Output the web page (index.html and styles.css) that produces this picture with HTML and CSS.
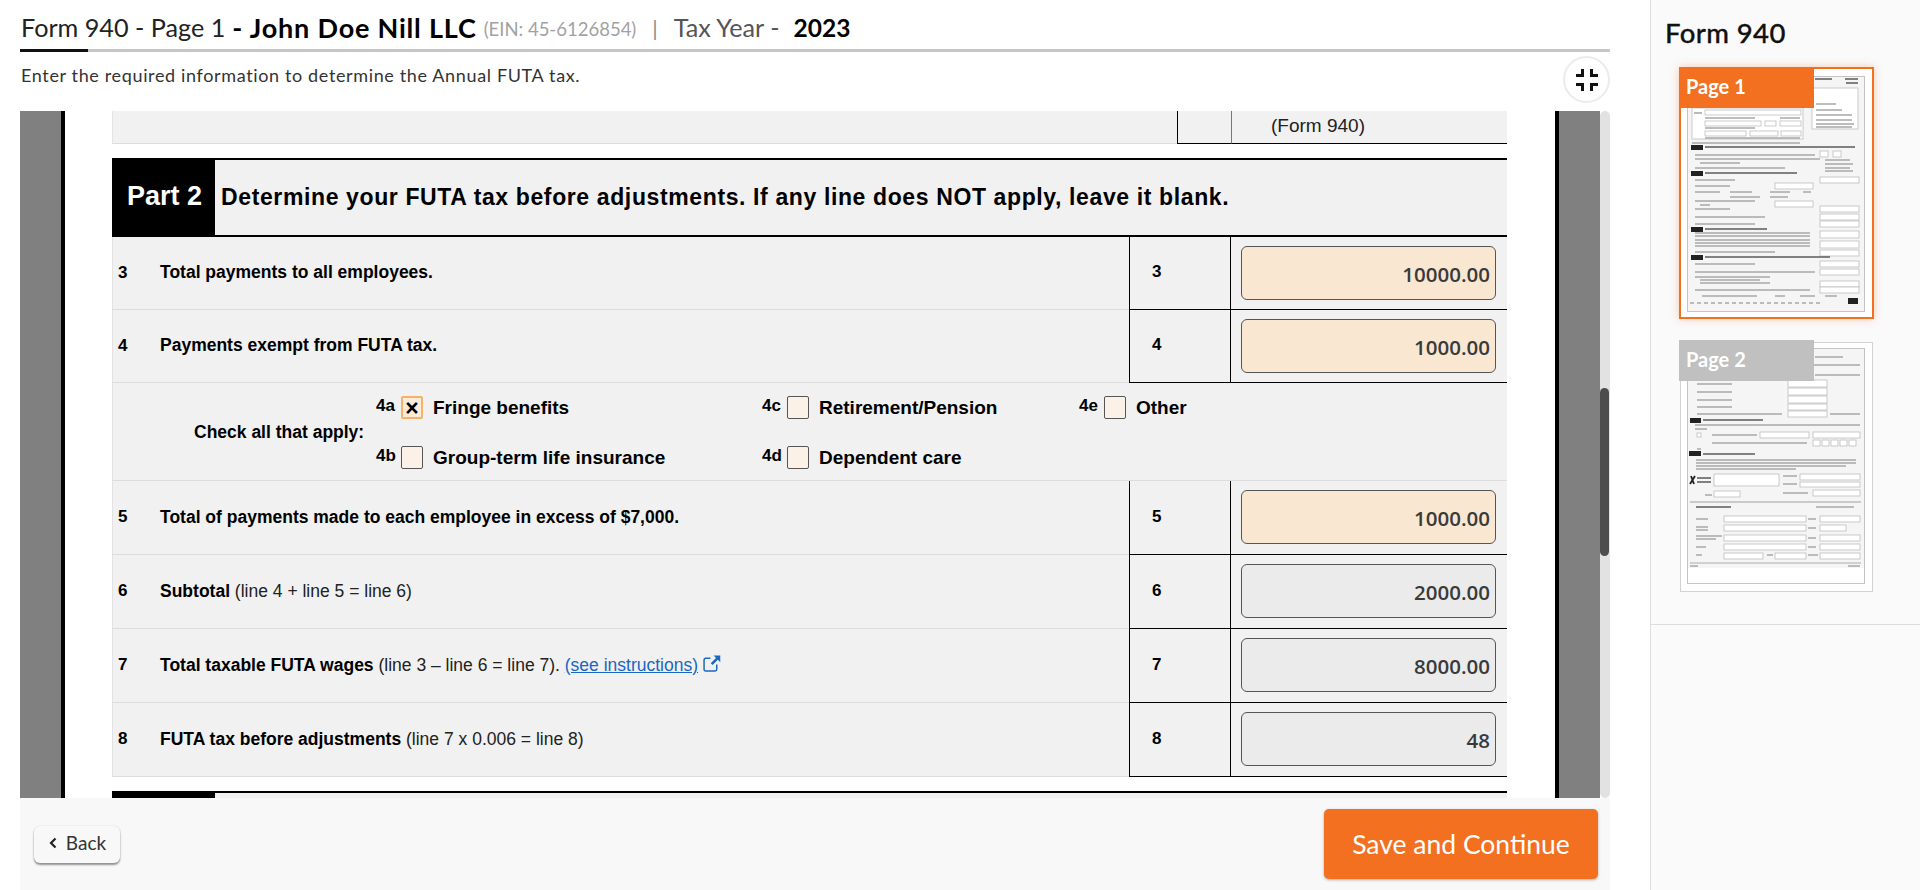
FILE: index.html
```html
<!DOCTYPE html>
<html lang="en">
<head>
  <meta charset="UTF-8" />
  <title>Form 940 - Page 1</title>
  <link rel="stylesheet" href="styles.css">
</head>
<body>
  <div class="main">
    <div class="page-title">
      <span>Form 940 - Page 1</span>
      <b class="company">- John Doe Nill LLC</b>
      <small class="ein">(EIN: 45-6126854)</small>
      <span class="sep">|</span>
      <span class="year-label">Tax Year -</span>
      <b class="year">2023</b>
    </div>
    <div class="tab-line"><div class="tab-line-active"></div></div>
    <div class="sub-row">
      <p class="sub-text">Enter the required information to determine the Annual FUTA tax.</p>
      <button class="collapse-btn" aria-label="Collapse">
        <svg width="22" height="22" viewBox="0 0 22 22">
          <path d="M5 0h3v8H0V5h5zM14 0h3v5h5v3h-8zM0 14h8v8H5v-5H0zM14 14h8v3h-5v5h-3z" fill="#111"/>
        </svg>
      </button>
    </div>

    <div class="viewer">
      <div class="viewer-bg">
        <div class="sheet">
          <div class="stub-row">
            <div class="stub-left"></div>
            <div class="stub-num"></div>
            <div class="stub-val">(Form 940)</div>
          </div>

          <div class="part-head">
            <div class="part-tag">Part 2</div>
            <div class="part-title">Determine your FUTA tax before adjustments. If any line does NOT apply, leave it blank.</div>
          </div>

          <div class="line-row short">
            <div class="line-left"><span class="line-no">3</span><span class="line-text"><b>Total payments to all employees.</b></span></div>
            <div class="line-num">3</div>
            <div class="line-val"><div class="amount">10000.00</div></div>
          </div>
          <div class="line-row short">
            <div class="line-left"><span class="line-no">4</span><span class="line-text"><b>Payments exempt from FUTA tax.</b></span></div>
            <div class="line-num">4</div>
            <div class="line-val"><div class="amount">1000.00</div></div>
          </div>

          <div class="check-row">
            <div class="check-title">Check all that apply:</div>
            <div class="check-grid">
              <div class="check-item"><span class="check-code">4a</span><span class="box checked">×</span><span>Fringe benefits</span></div>
              <div class="check-item"><span class="check-code">4c</span><span class="box"></span><span>Retirement/Pension</span></div>
              <div class="check-item"><span class="check-code">4e</span><span class="box"></span><span>Other</span></div>
              <div class="check-item"><span class="check-code">4b</span><span class="box"></span><span>Group-term life insurance</span></div>
              <div class="check-item"><span class="check-code">4d</span><span class="box"></span><span>Dependent care</span></div>
            </div>
          </div>

          <div class="line-row">
            <div class="line-left"><span class="line-no">5</span><span class="line-text"><b>Total of payments made to each employee in excess of $7,000.</b></span></div>
            <div class="line-num">5</div>
            <div class="line-val"><div class="amount">1000.00</div></div>
          </div>
          <div class="line-row">
            <div class="line-left"><span class="line-no">6</span><span class="line-text"><b>Subtotal</b> (line 4 + line 5 = line 6)</span></div>
            <div class="line-num">6</div>
            <div class="line-val"><div class="amount calc">2000.00</div></div>
          </div>
          <div class="line-row">
            <div class="line-left"><span class="line-no">7</span><span class="line-text"><b>Total taxable FUTA wages</b> (line 3 – line 6 = line 7). <a class="help-link" href="#">(see instructions)</a>
              <svg class="ext-icon" width="18" height="17" viewBox="0 0 17 16"><path d="M13 9v4.500a1.500 1.500 0 0 1-1.500 1.500h-9A1.500 1.500 0 0 1 1 13.500v-9A1.500 1.500 0 0 1 2.500 3H7" fill="none" stroke="#1a66c0" stroke-width="1.400"/><path d="M10 0.500h6.300v6.300l-2.300-2.300-5 5-1.700-1.700 5-5z" fill="#1a66c0"/></svg>
            </span></div>
            <div class="line-num">7</div>
            <div class="line-val"><div class="amount calc">8000.00</div></div>
          </div>
          <div class="line-row">
            <div class="line-left"><span class="line-no">8</span><span class="line-text"><b>FUTA tax before adjustments</b> (line 7 x 0.006 = line 8)</span></div>
            <div class="line-num">8</div>
            <div class="line-val"><div class="amount calc">48</div></div>
          </div>

          <div class="part-head next">
            <div class="part-tag"></div>
            <div class="part-title"></div>
          </div>
        </div>
      </div>
      <div class="scroll-track"><div class="scroll-thumb"></div></div>
    </div>

    <div class="footer">
      <button class="back-btn">
        <svg width="10" height="12" viewBox="0 0 10 12"><path d="M7.500 1.500 3 6l4.500 4.500" fill="none" stroke="#222" stroke-width="2.200"/></svg>
        Back
      </button>
      <button class="save-btn">Save and Continue</button>
    </div>
  </div>

  <aside class="sidebar">
    <div class="side-top">
      <h2 class="side-title">Form 940</h2>

      <div class="thumb active">
        <div class="thumb-tag">Page 1</div>
        <svg class="thumb-img" width="191" height="248" viewBox="1681 69 191 248">
          <rect class="pg" x="1687.500" y="76.500" width="177" height="235"/>
          <path class="tx dark" d="M1815 79h17M1845 79h13M1846 83h12"/>
          <rect x="1815" y="89" width="41" height="7" fill="#111"/>
          <rect class="bx" x="1812" y="88" width="46" height="41"/>
          <path class="tx" d="M1816 104h20M1816 110h26M1816 115h36M1816 120h36M1816 124h38M1816 127h36"/>
          <rect class="bx" x="1692" y="108" width="111" height="31"/>
          <path class="tx" d="M1694 113h8"/>
          <rect class="bx" x="1705" y="110" width="96" height="5"/>
          <rect class="bx" x="1705" y="121" width="56" height="5"/>
          <rect class="bx" x="1765" y="121" width="11" height="5"/>
          <rect class="bx" x="1780" y="121" width="21" height="5"/>
          <rect class="bx" x="1705" y="131" width="41" height="5"/>
          <rect class="bx" x="1750" y="131" width="28" height="5"/>
          <rect class="bx" x="1781" y="131" width="20" height="5"/>
          <path class="tx" d="M1705 118h50M1780 118h20M1705 128h50M1705 138h95M1692 143h108"/>

          <rect x="1691" y="145" width="12" height="5" fill="#222"/>
          <path class="tx dark" d="M1705 147h150"/>
          <path class="tx" d="M1695 155h120M1695 159h125M1700 163h40M1695 168h90M1825 160h25M1825 164h28M1825 168h25M1825 171h28"/>
          <rect class="bx" x="1820" y="151" width="8" height="6"/>
          <rect class="bx" x="1833" y="151" width="8" height="6"/>

          <rect x="1691" y="171" width="12" height="5" fill="#222"/>
          <path class="tx dark" d="M1705 173h92"/>
          <path class="tx" d="M1695 180h40M1695 186h35M1695 192h25M1730 192h22M1770 192h20M1803 192h8M1730 197h30M1770 197h18M1695 201h60M1700 205h10M1695 209h35M1695 217h70M1695 224h60"/>
          <rect class="bx" x="1820" y="177" width="39" height="6"/>
          <rect class="bx" x="1775" y="183" width="38" height="6"/>
          <rect class="bx" x="1775" y="201" width="38" height="6"/>
          <rect class="bx" x="1820" y="206" width="39" height="6"/>
          <rect class="bx" x="1820" y="214" width="39" height="6"/>
          <rect class="bx" x="1820" y="221" width="39" height="6"/>

          <rect x="1691" y="227" width="12" height="5" fill="#222"/>
          <path class="tx dark" d="M1705 229h62"/>
          <path class="tx" d="M1695 233h115M1695 236h115M1695 240h115M1695 243h115M1695 246h115M1695 252h80"/>
          <rect class="bx" x="1820" y="231" width="39" height="7"/>
          <rect class="bx" x="1820" y="241" width="39" height="7"/>
          <rect class="bx" x="1820" y="250" width="39" height="6"/>

          <rect x="1691" y="255" width="12" height="5" fill="#222"/>
          <path class="tx dark" d="M1705 257h125"/>
          <path class="tx" d="M1695 264h60M1695 272h120M1695 277h75M1700 280h60M1700 283h70M1695 290h115M1702 296h55M1775 296h10M1800 296h15M1825 296h12"/>
          <rect class="bx" x="1820" y="261" width="39" height="6"/>
          <rect class="bx" x="1820" y="269" width="39" height="6"/>
          <rect class="bx" x="1820" y="281" width="39" height="6"/>
          <rect class="bx" x="1820" y="287" width="39" height="6"/>
          <rect x="1848" y="298" width="10" height="6" fill="#222"/>
          <path class="tx" d="M1690 303h130" stroke-dasharray="4 3"/>
        </svg>
      </div>

      <div class="thumb">
        <div class="thumb-tag">Page 2</div>
        <svg class="thumb-img" width="191" height="248" viewBox="1681 343 191 248">
          <rect class="pg" x="1687.500" y="348.500" width="177" height="235"/>
          <path class="tx" d="M1815 357h28M1800 365h60M1815 375h45M1697 384h35M1697 392h35M1697 400h35M1697 407h35M1697 414h85M1830 414h30"/>
          <rect class="bx" x="1788" y="380" width="39" height="7"/>
          <rect class="bx" x="1788" y="388" width="39" height="7"/>
          <rect class="bx" x="1788" y="396" width="39" height="7"/>
          <rect class="bx" x="1788" y="404" width="39" height="6"/>
          <rect class="bx" x="1788" y="411" width="39" height="6"/>
          <rect x="1690" y="418" width="11" height="5" fill="#222"/>
          <path class="tx dark" d="M1703 420h60"/>
          <path class="tx" d="M1695 425h165M1695 429h12M1712 435h45M1712 443h95M1697 449h4"/>
          <rect class="bx" x="1697" y="433" width="4" height="4"/>
          <rect class="bx" x="1760" y="432" width="49" height="6"/>
          <rect class="bx" x="1813" y="432" width="47" height="6"/>
          <rect class="bx" x="1813" y="440" width="7" height="6"/>
          <rect class="bx" x="1822" y="440" width="7" height="6"/>
          <rect class="bx" x="1831" y="440" width="7" height="6"/>
          <rect class="bx" x="1840" y="440" width="7" height="6"/>
          <rect class="bx" x="1849" y="440" width="7" height="6"/>
          <rect x="1689" y="451" width="12" height="5" fill="#222"/>
          <path class="tx dark" d="M1703 454h52"/>
          <path class="tx" d="M1696 460h160M1696 463h160M1696 466h150M1696 469h100"/>
          <path d="M1690 484l5-8M1691 476l3 8" stroke="#222" stroke-width="1.800" fill="none"/>
          <path class="tx dark" d="M1697 478h14M1697 482h14"/>
          <rect class="bx" x="1714" y="474" width="65" height="12"/>
          <path class="tx" d="M1783 476h14M1783 484h14M1783 493h25M1705 495h7"/>
          <rect class="bx" x="1800" y="474" width="60" height="6"/>
          <rect class="bx" x="1800" y="482" width="60" height="5"/>
          <rect class="bx" x="1813" y="490" width="47" height="6"/>
          <rect class="bx" x="1714" y="491" width="26" height="6"/>
          <path d="M1690 502h171" stroke="#bbb" stroke-width="1.500"/>
          <path class="tx dark" d="M1696 507h35"/>
          <path class="tx" d="M1816 507h38M1696 519h12M1696 527h12M1696 530h12M1696 536h26M1696 539h20M1696 547h10M1696 555h6M1808 519h8M1808 528h8M1808 538h8M1808 547h8M1808 555h10M1767 555h6"/>
          <rect class="bx" x="1724" y="516" width="82" height="6"/>
          <rect class="bx" x="1820" y="516" width="40" height="6"/>
          <rect class="bx" x="1724" y="525" width="82" height="6"/>
          <rect class="bx" x="1820" y="525" width="26" height="6"/>
          <rect class="bx" x="1724" y="535" width="82" height="6"/>
          <rect class="bx" x="1820" y="535" width="40" height="6"/>
          <rect class="bx" x="1724" y="544" width="82" height="6"/>
          <rect class="bx" x="1820" y="544" width="40" height="6"/>
          <rect class="bx" x="1724" y="553" width="39" height="6"/>
          <rect class="bx" x="1775" y="553" width="31" height="6"/>
          <rect class="bx" x="1820" y="553" width="40" height="6"/>
          <path d="M1690 563h171" stroke="#aaa" stroke-width="1"/>
          <path class="tx" d="M1690 566h8M1848 566h12"/>
          <rect x="1688" y="568" width="176" height="15" fill="#fff"/>
        </svg>
      </div>
    </div>
  </aside>
</body>
</html>
```

FILE: styles.css
```css
html, body {
  margin: 0;
  padding: 0;
  height: 100%;
  overflow: hidden;
  background: #fff;
  color: #111;
  font-family: Lato, "Noto Sans", sans-serif;
}

body {
  display: flex;
}

button {
  font-family: inherit;
  cursor: pointer;
}

.main {
  width: 1650px;
  box-sizing: border-box;
  padding: 0 40px 0 20px;
  display: flex;
  flex-direction: column;
  height: 890px;
}

.page-title {
  height: 49px;
  display: flex;
  align-items: center;
  white-space: pre;
  font-size: 25.200px;
  padding: 5px 0 0 1px;
  box-sizing: border-box;
  color: #222;
}

.company {
  margin-left: 7px;
  font-weight: 700;
  color: #000;
  font-size: 27px;
  letter-spacing: 0.800px;
}

.ein {
  margin-left: 7px;
  font-size: 18.500px;
  color: #a2a2a2;
  padding-top: 3px;
}

.sep {
  margin-left: 16px;
  color: #8c8c8c;
  font-size: 22px;
}

.year-label {
  margin-left: 16px;
  color: #555;
}

.year {
  margin-left: 14px;
  color: #000;
  font-size: 24.500px;
}

.tab-line {
  height: 3px;
  background: #c6c6c6;
}

.tab-line-active {
  width: 68px;
  height: 3px;
  background: #111;
}

.sub-row {
  height: 59px;
  display: flex;
  justify-content: space-between;
  align-items: flex-start;
}

.sub-text {
  margin: 12px 0 0 1px;
  font-size: 18px;
  letter-spacing: 0.640px;
  line-height: 22px;
  color: #333;
}

.collapse-btn {
  width: 47px;
  height: 47px;
  margin-top: 4px;
  padding: 0;
  border: 2px solid #ececec;
  border-radius: 50%;
  background: #fff;
  display: flex;
  align-items: center;
  justify-content: center;
}

.viewer {
  height: 687px;
  display: flex;
  flex-shrink: 0;
}

.viewer-bg {
  flex: 1;
  background: #808080;
  padding: 0 41px;
  overflow: hidden;
}

.sheet {
  height: 100%;
  box-sizing: border-box;
  border-left: 4px solid #000;
  border-right: 4px solid #000;
  background: #fff;
  padding: 0 48px 0 47px;
  overflow: hidden;
  font-family: "Liberation Sans", Arial, sans-serif;
  color: #000;
}

.scroll-track {
  width: 10px;
  background: #e2e2e2;
  border-radius: 5px;
  padding-top: 277px;
  box-sizing: border-box;
}

.scroll-thumb {
  width: 9px;
  height: 168px;
  background: #4d4d4d;
  border-radius: 5px;
}

.stub-row {
  height: 33px;
  display: flex;
  background: #f1f1f1;
  box-sizing: border-box;
}

.stub-left {
  width: 1064px;
  border-bottom: 1px solid #ddd;
  border-left: 1px solid #e4e4e4;
}

.stub-num {
  width: 53px;
  border-left: 1px solid #000;
  border-right: 1px solid #777;
  border-bottom: 1px solid #000;
}

.stub-val {
  flex: 1;
  padding: 4px 0 0 39px;
  font-size: 19px;
  color: #222;
  border-bottom: 1px solid #000;
}

.part-head {
  height: 79px;
  margin-top: 14px;
  box-sizing: border-box;
  border-top: 2px solid #000;
  border-bottom: 2px solid #000;
  display: flex;
  background: #f1f1f1;
}

.part-tag {
  width: 103px;
  background: #000;
  color: #fff;
  font-size: 27px;
  font-weight: 700;
  display: flex;
  align-items: center;
  justify-content: center;
  padding: 0 0 2px 2px;
  box-sizing: border-box;
}

.part-title {
  flex: 1;
  padding-left: 6px;
  font-size: 23px;
  font-weight: 700;
  letter-spacing: 0.620px;
  display: flex;
  align-items: center;
  white-space: nowrap;
}

.part-head.next {
  height: 40px;
}

.line-row {
  height: 74px;
  display: flex;
  background: #f1f1f1;
}

.line-row.short {
  height: 73px;
}

.line-left {
  width: 1017px;
  box-sizing: border-box;
  border-left: 1px solid #e2e2e2;
  border-bottom: 1px solid #ddd;
  padding: 0 0 1px 5px;
  display: flex;
  align-items: center;
  font-size: 17.500px;
  color: #222;
}

.line-left b {
  color: #000;
}

.line-no {
  width: 42px;
  font-size: 17px;
  font-weight: 700;
  color: #000;
}

.help-link {
  color: #1a66c0;
}

.ext-icon {
  vertical-align: -1px;
}

.line-num {
  width: 101px;
  box-sizing: border-box;
  border-left: 1px solid #000;
  border-bottom: 1px solid #000;
  padding: 0 0 2px 22px;
  display: flex;
  align-items: center;
  font-size: 17px;
  font-weight: 700;
}

.line-val {
  flex: 1;
  box-sizing: border-box;
  border-left: 1px solid #000;
  border-bottom: 1px solid #000;
  padding: 9px 11px 0 10px;
}

.amount {
  height: 54px;
  box-sizing: border-box;
  border: 1px solid #555;
  border-radius: 6px;
  background: #f9e7d2;
  font-family: "Open Sans", "Noto Sans", sans-serif;
  font-size: 20.500px;
  font-weight: 600;
  color: #3a3a3a;
  text-align: right;
  line-height: 55px;
  padding-right: 5px;
}

.amount.calc {
  background: #ebebeb;
}

.check-row {
  height: 98px;
  box-sizing: border-box;
  background: #f1f1f1;
  border-left: 1px solid #e2e2e2;
  border-bottom: 1px solid #ddd;
  display: flex;
  align-items: center;
  font-weight: 700;
  padding-top: 2px;
}

.check-title {
  width: 263px;
  padding: 0 0 0 81px;
  box-sizing: border-box;
  font-size: 17.500px;
  white-space: nowrap;
}

.check-grid {
  display: grid;
  grid-template-columns: 386px 317px 200px;
  row-gap: 27px;
}

.check-item {
  display: flex;
  align-items: center;
  height: 23px;
  font-size: 19px;
}

.check-code {
  width: 25px;
  font-size: 17px;
  padding-bottom: 3px;
}

.box {
  width: 22px;
  height: 23px;
  box-sizing: border-box;
  border: 1px solid #555;
  border-radius: 2px;
  background: #fbf1e6;
  margin-right: 10px;
  text-align: center;
  font-size: 23px;
  line-height: 20px;
  font-weight: 700;
}

.box.checked {
  border: 2px solid #f6b26b;
  background: #fbecd9;
}

.footer {
  flex: 1;
  background: #f8f8f8;
  display: flex;
  justify-content: space-between;
  align-items: center;
  padding: 0 12px 0 14px;
}

.back-btn {
  width: 86px;
  height: 37px;
  padding: 0 0 3px 0;
  border: none;
  border-radius: 6px;
  background: #f8f8f8;
  box-shadow: 0 2px 2px rgba(0, 0, 0, 0.4), 0 0 2px rgba(0, 0, 0, 0.12);
  font-size: 19px;
  color: #333;
  display: flex;
  align-items: center;
  justify-content: center;
  gap: 8px;
}

.save-btn {
  width: 274px;
  height: 70px;
  border: none;
  border-radius: 5px;
  background: #f37021;
  box-shadow: 0 1px 3px rgba(0, 0, 0, 0.3);
  color: #fff;
  font-size: 26.500px;
}

.sidebar {
  flex: 1;
  background: #fafafa;
  border-left: 1px solid #ddd;
}

.side-top {
  height: 625px;
  box-sizing: border-box;
  border-bottom: 1px solid #ddd;
  padding: 16px 0 0 28px;
}

.side-title {
  margin: 0 0 17px -14px;
  font-size: 27.500px;
  line-height: 34px;
  font-weight: 500;
  color: #111;
  letter-spacing: 0.400px;
  -webkit-text-stroke: 0.300px #111;
}

.thumb {
  width: 191px;
  height: 248px;
  position: relative;
  border: 1px solid #d2d2d2;
  background: #fff;
  margin: 23px 0 0 1px;
}

.thumb.active {
  border: 2px solid #f37021;
  margin: 0;
  box-shadow: 0 0 8px rgba(243, 112, 33, 0.35);
}

.thumb-tag {
  position: absolute;
  z-index: 2;
  top: -3px;
  left: -2px;
  width: 135px;
  height: 41px;
  box-sizing: border-box;
  background: #c0c0c0;
  color: #fff;
  font-size: 20px;
  font-weight: 700;
  line-height: 39px;
  padding-left: 7px;
}

.thumb.active .thumb-tag {
  top: -2px;
  background: #f37021;
}

.thumb-img {
  display: block;
  filter: blur(0.500px);
}

.pg {
  fill: #f5f5f5;
  stroke: #c4c4c4;
}

.bx {
  fill: #fff;
  stroke: #bdbdbd;
  stroke-width: 0.8;
}

.tx {
  stroke: #a8a8a8;
  stroke-width: 1.6;
  fill: none;
}

.tx.dark {
  stroke: #5a5a5a;
}
```
